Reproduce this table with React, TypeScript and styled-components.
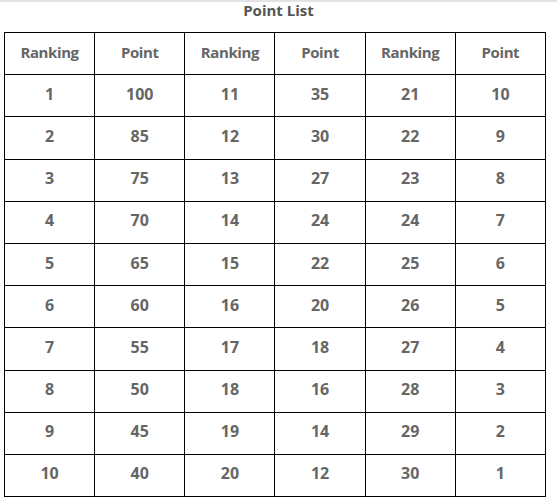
import styled, { createGlobalStyle } from "styled-components";

const GlobalStyle = createGlobalStyle`
  html, body {
    margin: 0;
    padding: 0;
    background: #fff;
  }
  body {
    font-family: "Open Sans", "Noto Sans", "Liberation Sans", sans-serif;
  }
`;

const Page = styled.div`
  width: 557px;
  height: 502px;
  border-top: 2px solid #e3e3e3;
  box-sizing: border-box;
`;

const Title = styled.h3`
  margin: 0;
  height: 30px;
  line-height: 16px;
  text-align: center;
  font-size: 15px;
  font-weight: 700;
  color: #555;
`;

const Table = styled.table`
  margin-left: 4px;
  width: 542px;
  border-collapse: collapse;
  table-layout: fixed;
`;

const Row = styled.tr`
  height: 42.2px;
`;

const Cell = styled.td<{ $head?: boolean }>`
  border: 1px solid #000;
  padding: 0 0 4px;
  text-align: center;
  vertical-align: middle;
  font-size: ${(p) => (p.$head ? "15px" : "16px")};
  font-weight: 700;
  letter-spacing: ${(p) => (p.$head ? "-0.4px" : "0")};
  color: #666;
`;

const headers = ["Ranking", "Point", "Ranking", "Point", "Ranking", "Point"];
const points = [100, 85, 75, 70, 65, 60, 55, 50, 45, 40, 35, 30, 27, 24, 22, 20, 18, 16, 14, 12, 10, 9, 8, 7, 6, 5, 4, 3, 2, 1];

export default function App() {
  const rows = Array.from({ length: 10 }, (_, i) => [
    i + 1, points[i],
    i + 11, points[i + 10],
    i + 21, points[i + 20],
  ]);

  return (
    <Page>
      <GlobalStyle />
      <Title>Point List</Title>
      <Table>
        <thead>
          <Row>
            {headers.map((h, i) => (
              <Cell as="th" $head key={i}>{h}</Cell>
            ))}
          </Row>
        </thead>
        <tbody>
          {rows.map((r, i) => (
            <Row key={i}>
              {r.map((v, j) => (
                <Cell key={j}>{v}</Cell>
              ))}
            </Row>
          ))}
        </tbody>
      </Table>
    </Page>
  );
}
